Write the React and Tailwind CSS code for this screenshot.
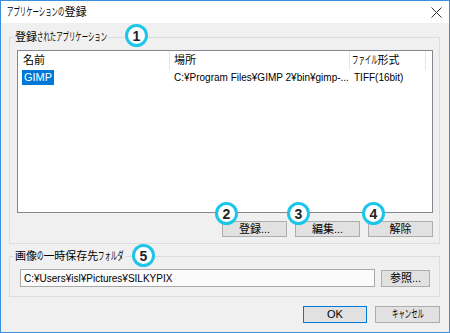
import React from "react";

// Meiryo UI draws kana much narrower than the CJK fallback we have, so
// squeeze runs of hiragana/katakana to roughly the same advance.
const KANA = /([\u3040-\u30ff]+)/;
const KANA_ONLY = /^[\u3040-\u30ff]+$/;

const Jp = ({ text }) =>
  text.split(KANA).map((part, i) =>
    KANA_ONLY.test(part) ? (
      <span
        key={i}
        className="inline-block whitespace-nowrap"
        style={{ width: `${part.length * 0.58}em` }}
      >
        <span className="inline-block origin-left scale-x-[0.58]">{part}</span>
      </span>
    ) : (
      <React.Fragment key={i}>{part}</React.Fragment>
    )
  );

const Badge = ({ n, className }) => (
  <div
    className={`absolute w-[23px] h-[23px] rounded-full border-[3px] border-[#1cc6e8] bg-white flex items-center justify-center text-[14px] font-bold leading-none text-[#222] ${className}`}
  >
    {n}
  </div>
);

const Button = ({ children, className = "" }) => (
  <div
    className={`h-[16px] flex items-center justify-center bg-[#e1e1e1] border border-[#adadad] text-[11px] leading-none text-black whitespace-nowrap ${className}`}
  >
    {children}
  </div>
);

const App = () => {
  return (
    <div className="relative w-[450px] h-[333px] flex flex-col border border-[#3d8fd8] bg-[#f0f0f0] font-['Liberation_Sans','Noto_Sans_CJK_JP',sans-serif] text-[11px] text-black">
      {/* Title bar */}
      <div className="h-[22px] bg-white flex items-center justify-between pl-[6px] pr-[7px]">
        <span className="whitespace-nowrap">
          <Jp text="アプリケーションの登録" />
        </span>
        <svg width="11" height="11" viewBox="0 0 11 11">
          <path d="M0.5 0.5 L10.5 10.5 M10.5 0.5 L0.5 10.5" stroke="#333" strokeWidth="1" />
        </svg>
      </div>

      {/* Registered applications */}
      <fieldset className="mt-[6px] ml-[8px] w-[431px] border border-[#dcdcdc] pl-[4px] pb-[6px]">
        <legend className="px-[1px] leading-[16px] whitespace-nowrap">
          <Jp text="登録されたアプリケーション" />
        </legend>
        <div className="mt-[5px] ml-[3px] w-[416px] h-[163px] border border-[#828790] bg-white">
          <div className="h-[19px] flex">
            <div className="w-[152px] border-r border-[#e5e5e5] pl-[5px] flex items-center">名前</div>
            <div className="w-[180px] border-r border-[#e5e5e5] pl-[4px] flex items-center">場所</div>
            <div className="w-[76px] border-r border-[#e5e5e5] pl-[2px] flex items-center whitespace-nowrap">
              <span>
                <Jp text="ファイル形式" />
              </span>
            </div>
          </div>
          <div className="h-[15px] flex items-center">
            <div className="w-[152px] pl-[4px]">
              <span className="inline-block h-[15px] leading-[15px] px-[2px] bg-[#0078d7] text-white">GIMP</span>
            </div>
            <div className="w-[180px] pl-[4px] text-[10px] whitespace-nowrap overflow-hidden">
              C:¥Program Files¥GIMP 2¥bin¥gimp-...
            </div>
            <div className="w-[76px] pl-[4px] text-[10px]">TIFF(16bit)</div>
          </div>
        </div>
        <div className="mt-[8px] ml-[3px] w-[416px] flex justify-end gap-[8px]">
          <Button className="w-[65px]">登録...</Button>
          <Button className="w-[65px]">編集...</Button>
          <Button className="w-[65px]">解除</Button>
        </div>
      </fieldset>

      {/* Temp folder */}
      <fieldset className="mt-[4px] ml-[8px] w-[431px] border border-[#dcdcdc] pl-[4px] pb-[9px]">
        <legend className="px-[1px] leading-[16px] whitespace-nowrap">
          <Jp text="画像の一時保存先フォルダ" />
        </legend>
        <div className="mt-[5px] flex items-end">
          <div className="ml-[6px] w-[355px] h-[18px] border border-[#a9a9a9] bg-[#fbfbfb] pl-[3px] flex items-center text-[10px]">
            C:¥Users¥isl¥Pictures¥SILKYPIX
          </div>
          <Button className="ml-[6px] w-[49px] h-[17px]">参照...</Button>
        </div>
      </fieldset>

      {/* Footer */}
      <div className="mt-[9px] pr-[9px] flex justify-end gap-[8px]">
        <div className="w-[64px] h-[17px] flex items-center justify-center bg-[#e1e1e1] border border-[#0078d7] text-[11px] leading-none">
          OK
        </div>
        <Button className="w-[65px] h-[17px]">
          <Jp text="キャンセル" />
        </Button>
      </div>

      {/* Annotation badges */}
      <Badge n="1" className="left-[124px] top-[23px]" />
      <Badge n="2" className="left-[214px] top-[201px]" />
      <Badge n="3" className="left-[286px] top-[201px]" />
      <Badge n="4" className="left-[361px] top-[201px]" />
      <Badge n="5" className="left-[131px] top-[243px]" />
    </div>
  );
};

export default App;
